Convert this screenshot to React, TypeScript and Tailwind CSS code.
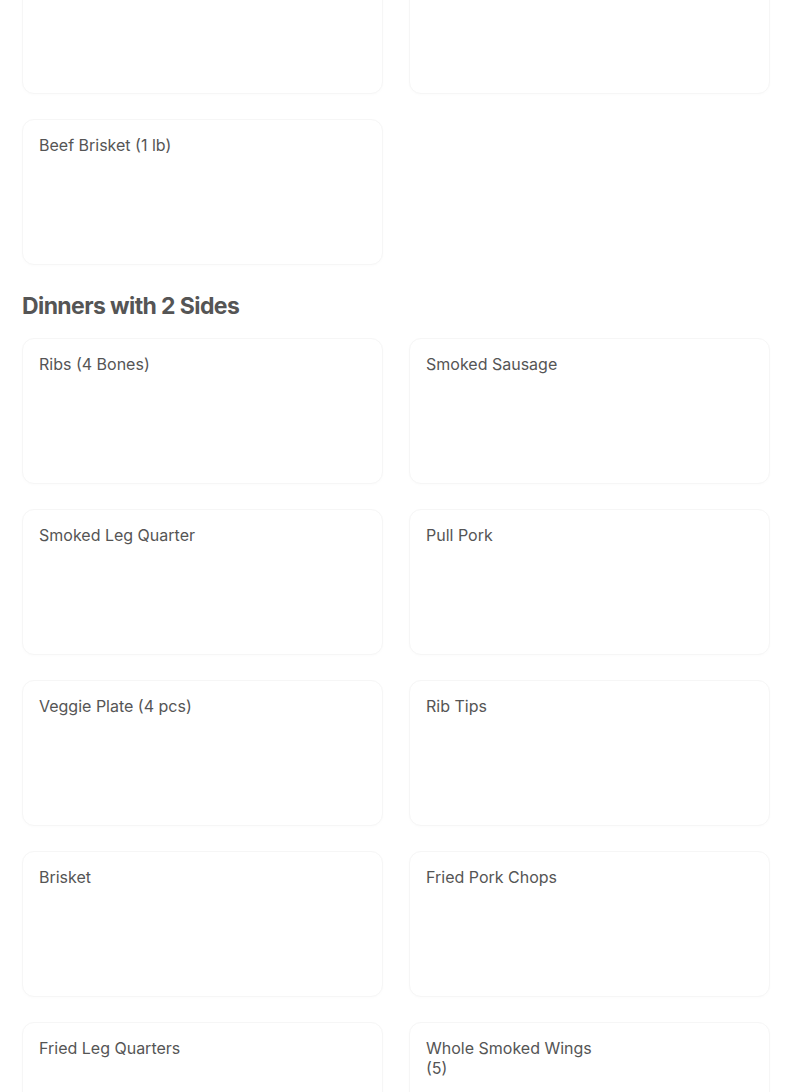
import React from "react";

function Card({ name }: { name?: string }) {
  return (
    <div className="h-[146px] rounded-[12px] border border-[#f6f6f6] bg-white px-[16px] pt-[15px] shadow-[0_1px_3px_rgba(0,0,0,0.015)]">
      {name && (
        <div className="max-w-[180px] text-[16px] leading-[20px] text-[#555555]">{name}</div>
      )}
    </div>
  );
}

export default function App() {
  const top1 = ["", ""];
  const top2 = ["Beef Brisket (1 lb)"];
  const dinners = [
    "Ribs (4 Bones)",
    "Smoked Sausage",
    "Smoked Leg Quarter",
    "Pull Pork",
    "Veggie Plate (4 pcs)",
    "Rib Tips",
    "Brisket",
    "Fried Pork Chops",
    "Fried Leg Quarters",
    "Whole Smoked Wings (5)",
  ];
  return (
    <div
      className="h-[1092px] w-[804px] overflow-hidden bg-white"
      style={{ fontFamily: "Inter, Roboto, 'Noto Sans', Arial, sans-serif" }}
    >
      <div className="mt-[-52px] px-[22px]">
        <div className="grid grid-cols-2 gap-x-[26px] gap-y-[25px] pr-[12px]">
          {top1.map((n, i) => (
            <Card key={"a" + i} name={n} />
          ))}
          {top2.map((n, i) => (
            <Card key={"b" + i} name={n} />
          ))}
        </div>
        <h2 className="mt-[26px] mb-[17px] text-[23px] font-bold leading-[30px] tracking-[-0.6px] text-[#555555]">
          Dinners with 2 Sides
        </h2>
        <div className="grid grid-cols-2 gap-x-[26px] gap-y-[25px] pr-[12px]">
          {dinners.map((n, i) => (
            <Card key={"d" + i} name={n} />
          ))}
        </div>
      </div>
    </div>
  );
}
